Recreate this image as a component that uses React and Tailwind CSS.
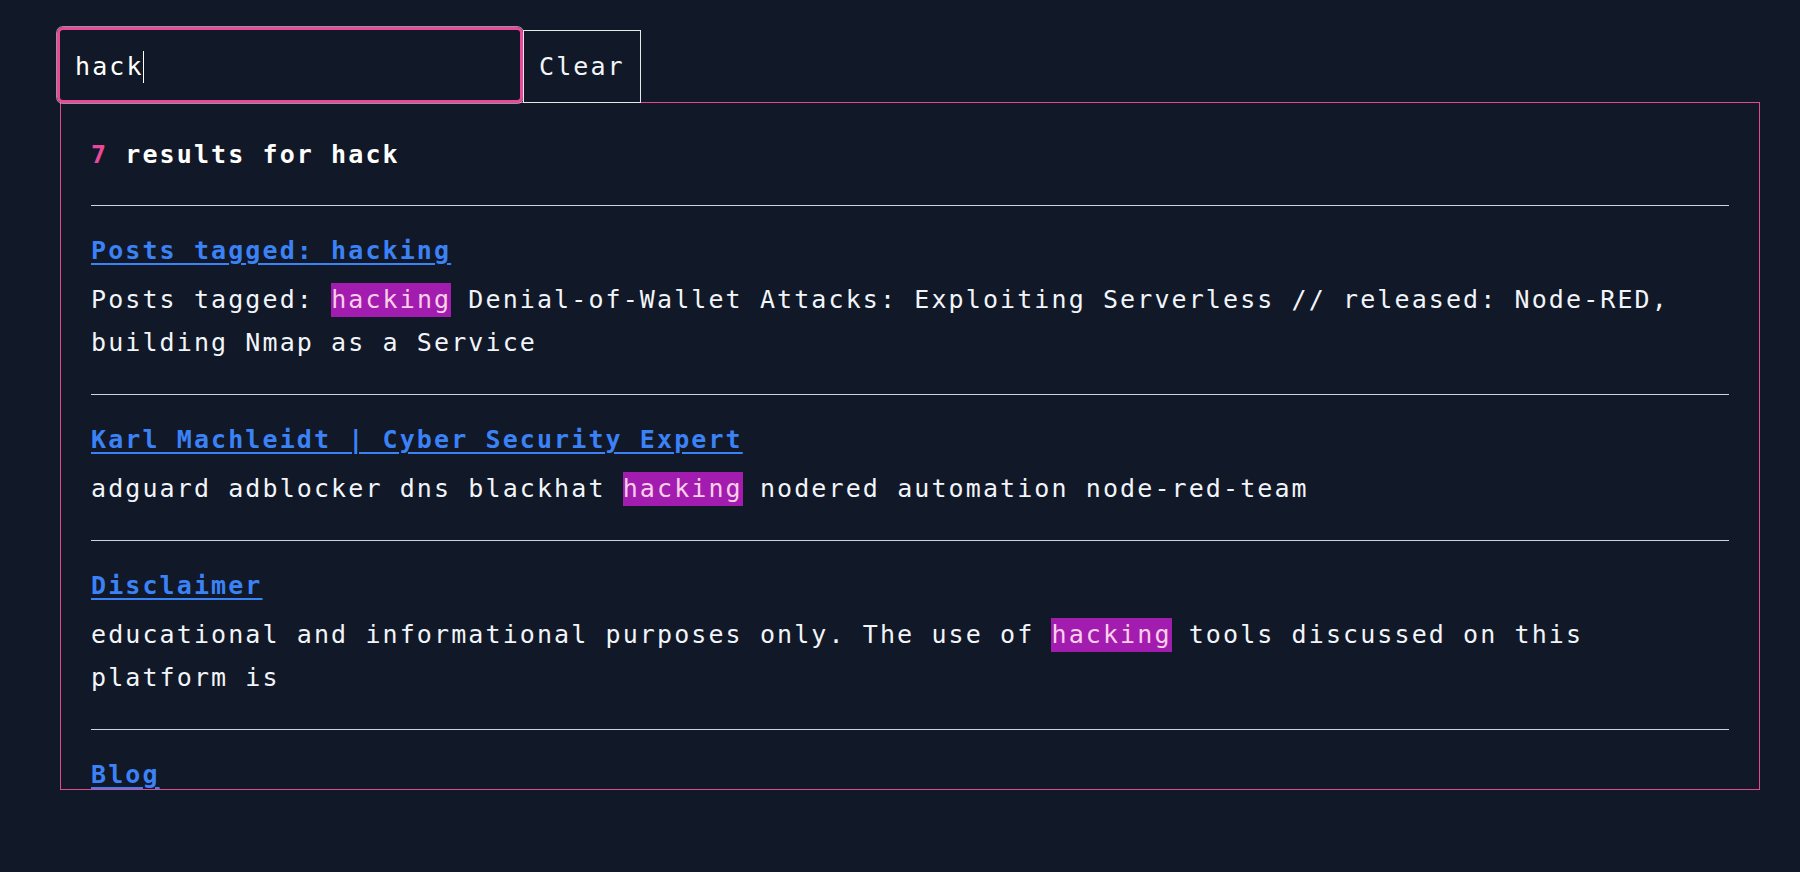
import React from "react";

const results = [
  {
    title: "Posts tagged: hacking",
    before: "Posts tagged: ",
    after:
      " Denial-of-Wallet Attacks: Exploiting Serverless // released: Node-RED, building Nmap as a Service",
  },
  {
    title: "Karl Machleidt | Cyber Security Expert",
    before: "adguard adblocker dns blackhat ",
    after: " nodered automation node-red-team",
  },
  {
    title: "Disclaimer",
    before: "educational and informational purposes only. The use of ",
    after: " tools discussed on this platform is",
  },
  {
    title: "Blog",
    before: "",
    after: "",
  },
];

const Result = ({ item }) => {
  return (
    <li className="border-t border-[#cbd5e1] pt-[23px] pb-[30px]">
      <a
        href="#"
        className="block leading-[43px] font-bold text-[#3b82f6] underline underline-offset-[4px] decoration-[2px] mb-[6px]"
      >
        {item.title}
      </a>
      {item.before || item.after ? (
        <p className="leading-[43px] text-[#f1f5f9]">
          {item.before}
          <mark className="bg-[#a21caf] text-[#fbcfe8] pt-[2px] pb-[3px]">
            hacking
          </mark>
          {item.after}
        </p>
      ) : null}
    </li>
  );
};

const App = () => {
  return (
    <div
      className="min-h-screen bg-[#111827] pl-[57px] pt-[27px] text-[25px] tracking-[2.1px] text-white"
      style={{ fontFamily: '"DejaVu Sans Mono", "Liberation Mono", monospace' }}
    >
      <div className="flex items-end">
        <div className="w-[466px] h-[76px] border-[3px] border-[#ec4899] rounded-[6px] shadow-[0_0_0_1px_rgba(255,255,255,0.55)] flex items-center pl-[15px] pt-[4px]">
          <span>hack</span>
          <span className="w-[1.5px] h-[32px] bg-white -ml-[1px]"></span>
        </div>
        <button className="h-[73px] px-[15px] border border-[#e5e7eb] bg-transparent text-[#f1f5f9] tracking-[2.1px]">
          Clear
        </button>
      </div>
      <div className="ml-[3px] -mt-[1px] w-[1700px] h-[688px] overflow-hidden border border-[#e14b93] px-[30px] pt-[30px]">
        <h2 className="font-bold leading-[43px] mb-[29px]">
          <span className="text-[#ec4899]">7</span> results for hack
        </h2>
        <ul>
          {results.map((item) => (
            <Result key={item.title} item={item} />
          ))}
        </ul>
      </div>
    </div>
  );
};

export default App;
